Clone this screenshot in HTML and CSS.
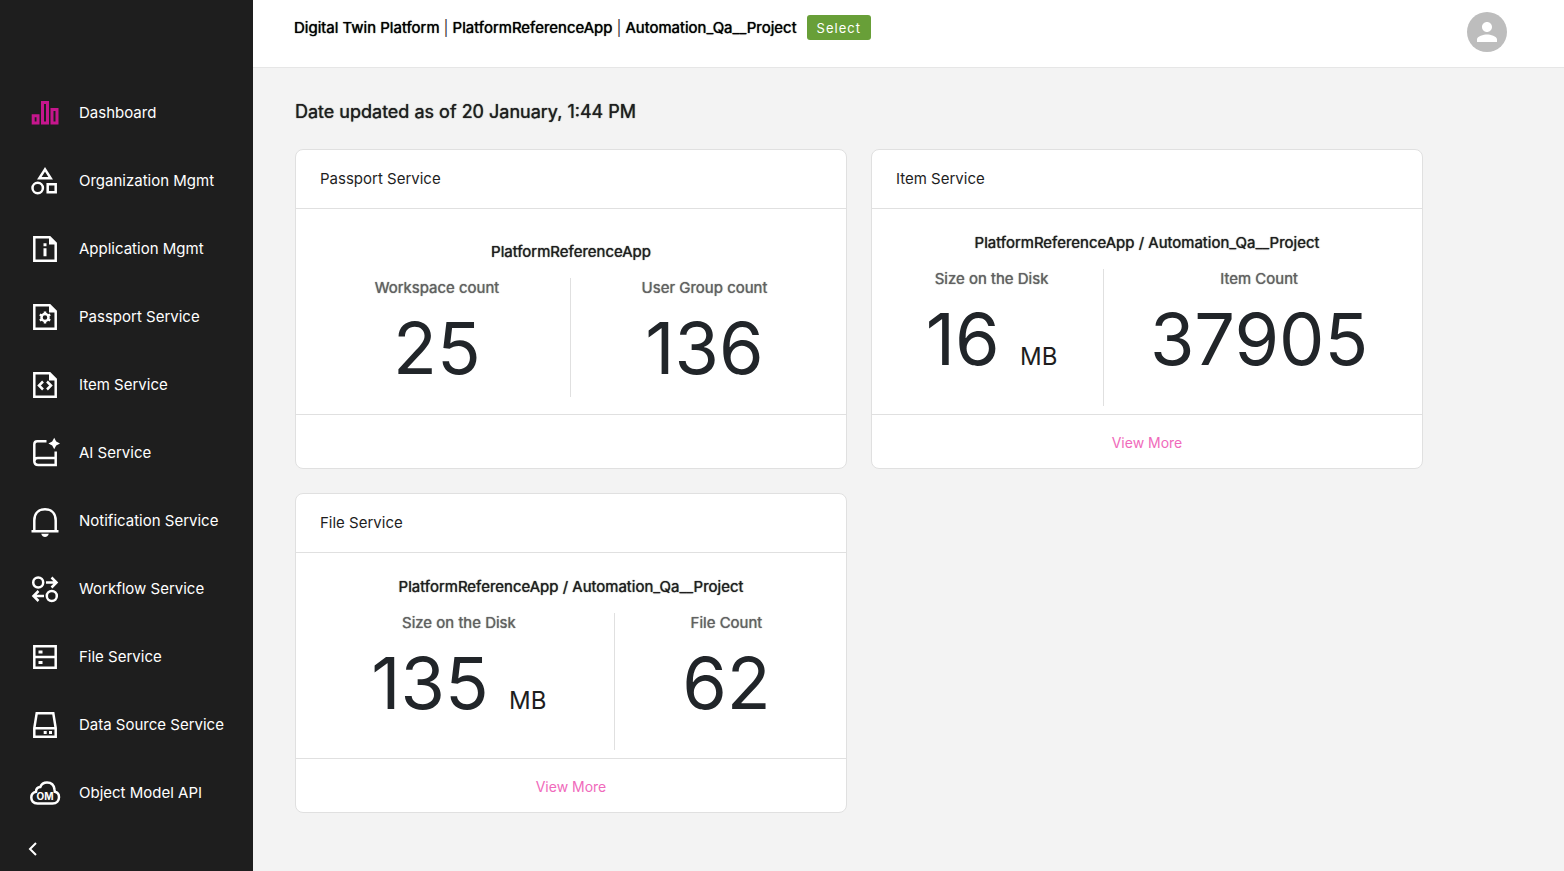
FILE: index.html
```
<!DOCTYPE html>
<html lang="en">
<head>
  <meta charset="UTF-8">
  <meta name="viewport" content="width=device-width, initial-scale=1.0">
  <title>Digital Twin Platform</title>
  <link rel="stylesheet" href="styles.css">
</head>
<body>
  <aside class="sidebar">
    <nav class="menu">
      <a href="#" class="menu-item active">
        <svg class="menu-icon" viewBox="0 0 32 32"><path d="M4.200 18.800H9V26H4.200zM13.500 5.500h5V26h-5zM23 12.500h5V26h-5z"/></svg>
        <span>Dashboard</span>
      </a>
      <a href="#" class="menu-item">
        <svg class="menu-icon" viewBox="0 0 32 32"><path d="M16 4.300 10.300 13.300h11.400zM18.700 19.200h8v8h-8z"/><circle cx="8.700" cy="23" r="5.200"/></svg>
        <span>Organization Mgmt</span>
      </a>
      <a href="#" class="menu-item">
        <svg class="menu-icon" viewBox="0 0 32 32"><path d="M5.300 4.300h15.400l6 6v17.400H5.300z"/><path class="fill" d="M20 4v7.500h7zM14.500 10.300h3v3h-3zM14.500 15.200h3v8h-3z"/></svg>
        <span>Application Mgmt</span>
      </a>
      <a href="#" class="menu-item">
        <svg class="menu-icon" viewBox="0 0 32 32"><path d="M5.300 4.300h15.400l6 6v17.400H5.300z"/><path class="fill" d="M20 4v7.500h7z"/><circle cx="16" cy="16.500" r="3.500"/><path d="M16 10.500v2.500M16 20v2.500M10.800 13.500l2.200 1.200M19 18.300l2.200 1.200M10.800 19.500l2.200-1.200M19 14.700l2.200-1.200"/></svg>
        <span>Passport Service</span>
      </a>
      <a href="#" class="menu-item">
        <svg class="menu-icon" viewBox="0 0 32 32"><path d="M5.300 4.300h15.400l6 6v17.400H5.300zM14 12.500l-4 4 4 4M18 12.500l4 4-4 4"/><path class="fill" d="M20 4v7.500h7z"/></svg>
        <span>Item Service</span>
      </a>
      <a href="#" class="menu-item">
        <svg class="menu-icon" viewBox="0 0 32 32"><path d="M17.500 4.300H8.300q-3 0-3 3v17q0 3.700 4 3.700h17.400V14.500M5.300 24.500q0-3.500 3.500-3.500h17.900"/><path class="fill" d="M25.200.7 27.200 4.500 31 6.500 27.200 8.500 25.200 12.300l-2-3.800-3.800-2 3.800-2z"/></svg>
        <span>AI Service</span>
      </a>
      <a href="#" class="menu-item">
        <svg class="menu-icon" viewBox="0 0 32 32"><path d="M5.300 26V15.500C5.300 8 10 4.300 16 4.300S26.700 8 26.700 15.500V26M2.500 26.200h27"/><path class="fill" d="M12.200 28.700h7.600q-1.200 3.300-3.800 3.300t-3.800-3.300z"/></svg>
        <span>Notification Service</span>
      </a>
      <a href="#" class="menu-item">
        <svg class="menu-icon" viewBox="0 0 32 32"><circle cx="9.200" cy="9.500" r="5"/><circle cx="22.800" cy="23" r="5"/><path d="M17 9.500h10M22.500 4.500l5 5-5 5M15 23H5M9.500 18l-5 5 5 5"/></svg>
        <span>Workflow Service</span>
      </a>
      <a href="#" class="menu-item">
        <svg class="menu-icon" viewBox="0 0 32 32"><path d="M5.300 5.300h21.400v21.400H5.300zM5.300 16h21.400"/><path class="fill" d="M9.500 9.500h4v3h-4zM9.500 20h4v3h-4z"/></svg>
        <span>File Service</span>
      </a>
      <a href="#" class="menu-item">
        <svg class="menu-icon" viewBox="0 0 32 32"><path d="M7.700 4.300h16.600l2.400 14.700v8.700H5.300V19zM5.300 19.200h21.400"/><path class="fill" d="M14.700 22h3v3h-3zM20 22h3v3h-3z"/></svg>
        <span>Data Source Service</span>
      </a>
      <a href="#" class="menu-item">
        <svg class="menu-icon" viewBox="0 0 32 32"><path d="M8.500 26.500C4 26.500 2.300 23.500 2.300 20.500c0-3.500 2.500-5.200 4.700-5.700 0-3 1.500-4.600 4.300-4.800C12.500 6.800 15 5.500 18 5.500c4.300 0 7 2.700 7.500 7 .2 1 .3 1.800.3 2.300 2.800.5 4.200 2.800 4.200 5.400 0 3.500-2.200 6.300-6.500 6.300z"/><text x="16" y="23" class="om">OM</text></svg>
        <span>Object Model API</span>
      </a>
    </nav>
    <button class="collapse-btn" aria-label="Collapse menu">
      <svg viewBox="0 0 12 14"><path d="M9 1 3 7l6 6"/></svg>
    </button>
  </aside>

  <div class="page">
    <header class="topbar">
      <div class="breadcrumb">
        <strong>Digital Twin Platform</strong>
        <span class="divider">|</span>
        <strong>PlatformReferenceApp</strong>
        <span class="divider">|</span>
        <strong>Automation_Qa__Project</strong>
        <button class="select-btn">Select</button>
      </div>
      <button class="avatar" aria-label="Account">
        <svg viewBox="0 0 24 24"><path d="M12 12c2.210 0 4-1.790 4-4s-1.790-4-4-4-4 1.790-4 4 1.790 4 4 4zm0 2c-2.670 0-8 1.340-8 4v2h16v-2c0-2.660-5.330-4-8-4z"/></svg>
      </button>
    </header>

    <main class="content">
      <h1 class="updated">Date updated as of 20 January, 1:44 PM</h1>

      <div class="cards">
        <section class="card">
          <h2 class="card-header">Passport Service</h2>
          <div class="card-body">
            <div class="card-title">PlatformReferenceApp</div>
            <div class="stats">
              <div class="stat">
                <div class="stat-label">Workspace count</div>
                <div class="stat-value">25</div>
              </div>
              <div class="stat">
                <div class="stat-label">User Group count</div>
                <div class="stat-value">136</div>
              </div>
            </div>
          </div>
          <div class="card-footer"></div>
        </section>

        <section class="card">
          <h2 class="card-header">Item Service</h2>
          <div class="card-body">
            <div class="card-title">PlatformReferenceApp / Automation_Qa__Project</div>
            <div class="stats">
              <div class="stat">
                <div class="stat-label">Size on the Disk</div>
                <div class="stat-value">16 <span class="unit">MB</span></div>
              </div>
              <div class="stat">
                <div class="stat-label">Item Count</div>
                <div class="stat-value">37905</div>
              </div>
            </div>
          </div>
          <div class="card-footer"><a href="#">View More</a></div>
        </section>

        <section class="card">
          <h2 class="card-header">File Service</h2>
          <div class="card-body">
            <div class="card-title">PlatformReferenceApp / Automation_Qa__Project</div>
            <div class="stats">
              <div class="stat">
                <div class="stat-label">Size on the Disk</div>
                <div class="stat-value">135 <span class="unit">MB</span></div>
              </div>
              <div class="stat">
                <div class="stat-label">File Count</div>
                <div class="stat-value">62</div>
              </div>
            </div>
          </div>
          <div class="card-footer"><a href="#">View More</a></div>
        </section>
      </div>
    </main>
  </div>
</body>
</html>
```
FILE: styles.css
```
* {
  margin: 0;
  padding: 0;
  box-sizing: border-box;
}

body {
  display: flex;
  min-height: 100vh;
  font-family: Inter, "Liberation Sans", sans-serif;
  font-size: 15px;
  line-height: 20px;
  color: #1e1e1e;
  background: #f3f3f3;
}

button {
  border: none;
  font-family: inherit;
  cursor: pointer;
}

/* Sidebar */
.sidebar {
  flex: 0 0 253px;
  display: flex;
  flex-direction: column;
  justify-content: space-between;
  padding: 79px 0 12px;
  background: #1e1e1e;
}

.menu-item {
  display: flex;
  align-items: center;
  gap: 18px;
  height: 68px;
  padding-left: 29px;
  color: #fff;
  text-decoration: none;
}

.menu-icon {
  width: 32px;
  height: 32px;
  fill: none;
  stroke: #fff;
  stroke-width: 2.5;
  overflow: visible;
}

.menu-icon .fill {
  fill: #fff;
  stroke: none;
}

.menu-icon .om {
  fill: #fff;
  stroke: none;
  font-size: 10px;
  font-weight: 700;
  text-anchor: middle;
}

.active .menu-icon {
  stroke: #c6168d;
  stroke-width: 3;
}

.collapse-btn {
  width: 20px;
  height: 20px;
  margin-left: 23px;
  background: none;
}

.collapse-btn svg {
  display: block;
  height: 14px;
  margin: 0 auto;
  fill: none;
  stroke: #fff;
  stroke-width: 2;
}

/* Top bar */
.page {
  flex: 1;
  min-width: 0;
}

.topbar {
  display: flex;
  justify-content: space-between;
  align-items: flex-start;
  height: 68px;
  padding: 12px 57px 0 41px;
  background: #fff;
  border-bottom: 1px solid #e6e6e6;
}

.breadcrumb {
  display: flex;
  align-items: center;
  gap: 4px;
  padding-top: 3px;
  color: #000;
}

.breadcrumb strong,
.updated,
.card-title,
.stat-label {
  font-weight: 400;
  text-shadow: 0 0 1px currentColor;
}

.divider {
  opacity: 0.8;
}

.select-btn {
  height: 25px;
  margin-left: 6px;
  padding: 0 10px;
  border-radius: 3px;
  font-size: 13px;
  letter-spacing: 1px;
  color: #fff;
  background: #689f38;
}

.avatar {
  width: 40px;
  height: 40px;
  padding: 5px;
  border-radius: 50%;
  background: #bdbdbd;
}

.avatar svg {
  display: block;
  fill: #fff;
}

/* Dashboard */
.content {
  padding: 32px 141px 58px 42px;
}

.updated {
  margin-bottom: 25px;
  font-size: 18px;
  line-height: 24px;
}

.cards {
  display: grid;
  grid-template-columns: 1fr 1fr;
  gap: 24px;
}

.card {
  display: flex;
  flex-direction: column;
  min-height: 320px;
  background: #fff;
  border: 1px solid #e0e0e0;
  border-radius: 8px;
}

.card-header {
  padding: 19px 24px;
  border-bottom: 1px solid #e0e0e0;
  font-size: 15px;
  font-weight: 400;
}

.card-body {
  flex: 1;
  display: flex;
  flex-direction: column;
  justify-content: center;
  padding: 16px 8px 0;
}

.card-title {
  margin-bottom: 16px;
  text-align: center;
}

.stats {
  display: flex;
}

.stat {
  flex: 1 1 auto;
  padding-bottom: 6px;
  text-align: center;
}

.stat + .stat {
  border-left: 1px solid #e0e0e0;
}

.stat-label {
  margin-bottom: 6px;
  color: #616161;
}

.stat-value {
  font-size: 72px;
  line-height: 87px;
  color: #212529;
}

.unit {
  font-size: 24px;
  color: #1e1e1e;
}

.card-footer {
  height: 54px;
  padding-top: 18px;
  border-top: 1px solid #e0e0e0;
  font-size: 14px;
  text-align: center;
}

.card-footer a {
  color: #f06abb;
  text-decoration: none;
}
```
